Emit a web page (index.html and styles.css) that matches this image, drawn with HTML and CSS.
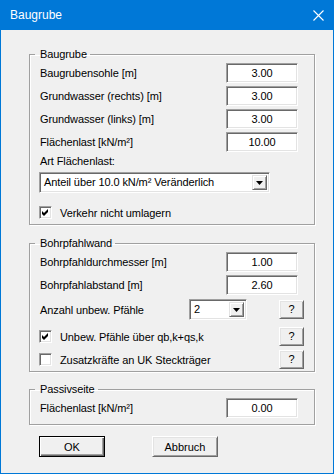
FILE: index.html
```html
<!DOCTYPE html>
<html lang="de">
  <head>
    <meta charset="UTF-8" />
    <title>Baugrube</title>
    <link rel="stylesheet" href="styles.css">
  </head>

  <body>
    <div class="window">
      <div class="titlebar">
        <span class="title">Baugrube</span>
        <svg class="close" width="11" height="11" viewBox="0 0 11 11">
          <path d="M0.5 0.5 L10.5 10.5 M10.5 0.5 L0.5 10.5" stroke="#fff" stroke-width="1.1" fill="none" />
        </svg>
      </div>

      <div class="client">
        <fieldset class="group group-top">
          <legend>Baugrube</legend>
          <div class="row first">
            <span>Baugrubensohle [m]</span>
            <div class="edit">3.00</div>
          </div>
          <div class="row">
            <span>Grundwasser (rechts) [m]</span>
            <div class="edit">3.00</div>
          </div>
          <div class="row">
            <span>Grundwasser (links) [m]</span>
            <div class="edit">3.00</div>
          </div>
          <div class="row">
            <span>Flächenlast [kN/m²]</span>
            <div class="edit">10.00</div>
          </div>
          <div class="caption">Art Flächenlast:</div>
          <div class="combo combo-wide">
            <span class="combo-text">Anteil über 10.0 kN/m² Veränderlich</span>
            <span class="drop"><svg width="7" height="4" viewBox="0 0 7 4"><path d="M0 0 H7 L3.5 4 Z" fill="#000" /></svg></span>
          </div>
          <div class="check-row check-first">
            <span class="box">
              <svg width="7" height="7" viewBox="0 0 7 7"><path d="M0 2 L2 4 L6 0 V3 L2 7 L0 5 Z" fill="#000" /></svg>
            </span>
            <span>Verkehr nicht umlagern</span>
          </div>
        </fieldset>

        <fieldset class="group group-pile">
          <legend>Bohrpfahlwand</legend>
          <div class="row first">
            <span>Bohrpfahldurchmesser [m]</span>
            <div class="edit">1.00</div>
          </div>
          <div class="row">
            <span>Bohrpfahlabstand [m]</span>
            <div class="edit">2.60</div>
          </div>
          <div class="row q-row q-combo">
            <span class="grow">Anzahl unbew. Pfähle</span>
            <div class="combo combo-small">
              <span class="combo-text">2</span>
              <span class="drop"><svg width="7" height="4" viewBox="0 0 7 4"><path d="M0 0 H7 L3.5 4 Z" fill="#000" /></svg></span>
            </div>
            <button class="btn help">?</button>
          </div>
          <div class="row q-row q-check">
            <div class="check-row grow">
              <span class="box">
                <svg width="7" height="7" viewBox="0 0 7 7"><path d="M0 2 L2 4 L6 0 V3 L2 7 L0 5 Z" fill="#000" /></svg>
              </span>
              <span>Unbew. Pfähle über qb,k+qs,k</span>
            </div>
            <button class="btn help">?</button>
          </div>
          <div class="row q-row q-last">
            <div class="check-row grow">
              <span class="box"></span>
              <span>Zusatzkräfte an UK Steckträger</span>
            </div>
            <button class="btn help">?</button>
          </div>
        </fieldset>

        <fieldset class="group group-passive">
          <legend>Passivseite</legend>
          <div class="row first">
            <span>Flächenlast [kN/m²]</span>
            <div class="edit">0.00</div>
          </div>
        </fieldset>

        <div class="buttons">
          <button class="btn push default">OK</button>
          <button class="btn push">Abbruch</button>
        </div>
      </div>
    </div>
  </body>
</html>
```

FILE: styles.css
```css
body {
  margin: 0;
  background: #f0f0f0;
}

.window {
  width: 334px;
  height: 474px;
  box-sizing: border-box;
  border: 1px solid #0078d7;
  border-top: none;
  background: #f0f0f0;
  font-family: "Liberation Sans", Arial, sans-serif;
  font-size: 11px;
  letter-spacing: -0.1px;
  line-height: 14px;
  color: #000;
  display: flex;
  flex-direction: column;
}

.titlebar {
  height: 30px;
  margin: 0 -1px;
  background: #0078d7;
  color: #fff;
  display: flex;
  align-items: center;
  justify-content: space-between;
  padding: 0 10px 0 10px;
}

.title {
  font-size: 12px;
  letter-spacing: 0;
}

.close {
  display: block;
  margin-top: 1px;
}

.client {
  padding: 17px 0 0 28px;
}

.group {
  width: 286px;
  box-sizing: border-box;
  margin: 0;
  padding: 0 0 0 10px;
  border: 1px solid #a0a0a0;
  box-shadow: inset 1px 1px #fff, 1px 1px #fff;
}

.group legend {
  padding: 0 3px 0 5px;
  margin-left: -5px;
  line-height: 14px;
}

.group-top {
  padding-bottom: 5px;
}

.group-pile {
  margin-top: 11px;
  padding-bottom: 2px;
}

.group-passive {
  margin-top: 10px;
  padding-bottom: 6px;
}

.row {
  display: flex;
  align-items: center;
  justify-content: space-between;
  height: 20px;
  margin-top: 3px;
  padding-right: 16px;
}

.row.first {
  margin-top: 2px;
}

.edit {
  width: 72px;
  height: 20px;
  box-sizing: border-box;
  background: #fff;
  border: 1px solid;
  border-color: #a0a0a0 #fff #fff #a0a0a0;
  box-shadow: inset 1px 1px #696969, inset -1px -1px #e3e3e3;
  text-align: center;
  line-height: 18px;
}

.caption {
  margin-top: 2px;
  height: 14px;
}

.combo {
  height: 21px;
  box-sizing: border-box;
  background: #fff;
  border: 1px solid;
  border-color: #a0a0a0 #fff #fff #a0a0a0;
  box-shadow: inset 1px 1px #696969, inset -1px -1px #e3e3e3;
  display: flex;
  align-items: stretch;
  padding: 2px;
}

.combo-wide {
  width: 231px;
  margin: 4px 0 0 -1px;
}

.combo-small {
  width: 58px;
}

.combo-text {
  flex: 1;
  line-height: 15px;
  padding-left: 2px;
  white-space: nowrap;
  overflow: hidden;
}

.drop {
  width: 15px;
  box-sizing: border-box;
  background: #f0f0f0;
  border: 1px solid;
  border-color: #e3e3e3 #696969 #696969 #e3e3e3;
  box-shadow: inset 1px 1px #fff, inset -1px -1px #a0a0a0;
  display: flex;
  align-items: center;
  justify-content: center;
}

.drop svg {
  display: block;
  margin-top: 1px;
}

.check-row {
  display: flex;
  align-items: center;
  gap: 8px;
  height: 13px;
}

.check-first {
  margin: 13px 0 0 -1px;
}

.box {
  width: 13px;
  height: 13px;
  box-sizing: border-box;
  background: #fff;
  border: 1px solid;
  border-color: #a0a0a0 #fff #fff #a0a0a0;
  box-shadow: inset 1px 1px #696969, inset -1px -1px #e3e3e3;
  display: flex;
  align-items: center;
  justify-content: center;
  flex-shrink: 0;
}

.box svg {
  display: block;
}

.q-row {
  padding-right: 10px;
}

.q-row .check-row {
  margin-left: -1px;
}

.grow {
  flex: 1;
}

.q-combo {
  height: 21px;
  margin-top: 4px;
}

.q-combo .combo {
  margin-right: 32px;
}

.q-check {
  height: 19px;
  margin-top: 7px;
}

.q-last {
  height: 19px;
  margin-top: 4px;
}

.btn {
  font-family: "Liberation Sans", Arial, sans-serif;
  font-size: 11px;
  color: #000;
  background: #f0f0f0;
  box-sizing: border-box;
  border: 1px solid;
  border-color: #fff #696969 #696969 #fff;
  box-shadow: inset 1px 1px #e3e3e3, inset -1px -1px #a0a0a0;
  padding: 0;
  margin: 0;
}

.help {
  width: 25px;
  height: 19px;
  line-height: 17px;
}

.buttons {
  display: flex;
  gap: 47px;
  margin-top: 11px;
  padding-left: 10px;
}

.push {
  width: 66px;
  height: 21px;
}

.push.default {
  border: 1px solid #000;
  box-shadow: inset 1px 1px #fff, inset -1px -1px #696969, inset -2px -2px #a0a0a0;
}
```
